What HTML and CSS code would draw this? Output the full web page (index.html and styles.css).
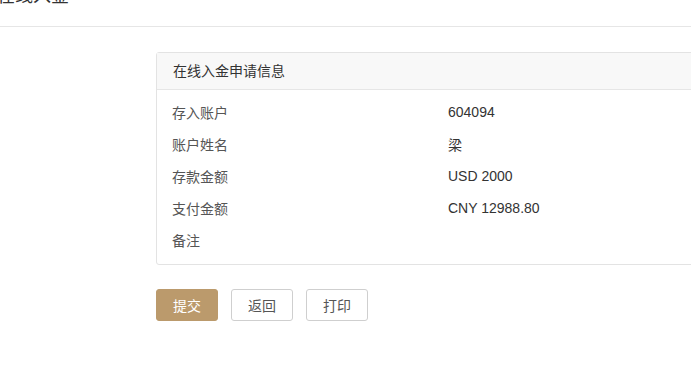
FILE: index.html
```html
<!DOCTYPE html>
<html lang="zh">
<head>
<meta charset="utf-8">
<link rel="stylesheet" href="styles.css">
</head>
<body>
<div class="page-head"><h1 class="page-title">在线入金</h1></div>
<div class="content">
  <div class="panel">
    <div class="panel-head">在线入金申请信息</div>
    <div class="panel-body">
      <div class="row"><span class="label">存入账户</span><span class="value">604094</span></div>
      <div class="row"><span class="label">账户姓名</span><span class="value">梁</span></div>
      <div class="row"><span class="label">存款金额</span><span class="value">USD 2000</span></div>
      <div class="row"><span class="label">支付金额</span><span class="value">CNY 12988.80</span></div>
      <div class="row"><span class="label">备注</span><span class="value"></span></div>
    </div>
  </div>
  <div class="actions">
    <button class="btn btn-primary">提交</button>
    <button class="btn">返回</button>
    <button class="btn">打印</button>
  </div>
</div>
</body>
</html>
```
FILE: styles.css
```css
html, body {
  margin: 0;
  padding: 0;
  background: #fff;
  overflow: hidden;
  width: 691px;
  height: 389px;
}
body {
  font-family: "Liberation Sans", "Noto Sans CJK SC", sans-serif;
  font-size: 14px;
  color: #333;
}
.page-head {
  height: 26px;
  border-bottom: 1px solid #e6e6e6;
  overflow: hidden;
}
.page-title {
  margin: 0;
  font-size: 18px;
  font-weight: normal;
  line-height: 24px;
  color: #333;
  margin-top: -16px;
  margin-left: -3px;
}
.content {
  padding: 25px 0 0 156px;
}
.panel {
  width: 620px;
  border: 1px solid #e3e3e3;
  border-radius: 3px;
  background: #fff;
}
.panel-head {
  height: 36px;
  line-height: 36px;
  padding: 0 16px;
  background: #f8f8f8;
  border-bottom: 1px solid #e6e6e6;
  color: #333;
}
.panel-body {
  padding: 6px 15px 8px;
}
.row {
  display: flex;
  height: 32px;
  align-items: center;
}
.label {
  width: 276px;
  color: #555;
}
.value {
  color: #333;
}
.actions {
  display: flex;
  gap: 13px;
  margin-top: 24px;
}
.btn {
  width: 62px;
  height: 32px;
  border: 1px solid #cfcfcf;
  border-radius: 3px;
  background: #fff;
  color: #555;
  font-family: "Liberation Sans", "Noto Sans CJK SC", sans-serif;
  font-size: 14px;
  padding: 0;
}
.btn-primary {
  background: #bb9a6c;
  border-color: #bb9a6c;
  color: #fff;
}
```
